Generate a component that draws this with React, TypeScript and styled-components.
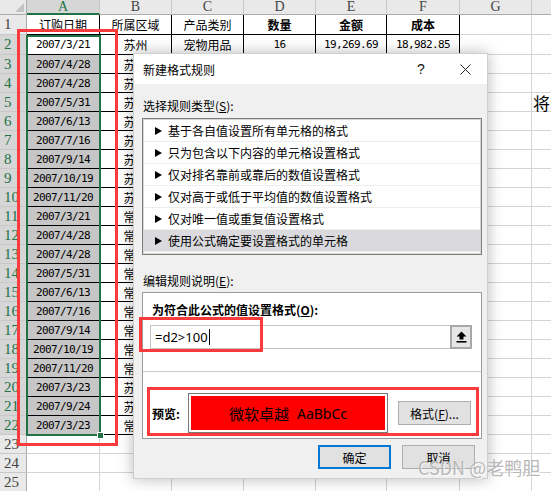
import styled, { createGlobalStyle } from 'styled-components';

const GlobalStyle = createGlobalStyle`
  html, body {
    margin: 0;
    padding: 0;
    overflow: hidden;
    background: #fff;
  }
  body {
    font-family: "Noto Sans CJK SC", "Noto Sans", sans-serif;
    color: #000;
  }
`;

// row-header column, then A..I
const COLS = [27, 73, 72, 72, 72, 71, 73, 72, 72, 72];
const LETTERS = ['A', 'B', 'C', 'D', 'E', 'F', 'G', 'H', 'I'];

const HEAD = ['订购日期', '所属区域', '产品类别', '数量', '金额', '成本'];
const FIRST = ['2007/3/21', '苏州', '宠物用品', '16', '19,269.69', '18,982.85'];
const DATES = [
  '2007/4/28', '2007/4/28', '2007/5/31', '2007/6/13', '2007/7/16', '2007/9/14', '2007/10/19',
  '2007/11/20', '2007/3/21', '2007/4/28', '2007/4/28', '2007/5/31', '2007/6/13', '2007/7/16',
  '2007/9/14', '2007/10/19', '2007/11/20', '2007/3/23', '2007/9/24', '2007/3/23',
];
const CITIES = [
  '苏州', '苏州', '苏州', '苏州', '苏州', '苏州', '苏州', '苏州',
  '常州', '常州', '常州', '常州', '常州', '常州', '常州', '常州', '常州',
  '苏州', '苏州', '常州',
];

const RULES = [
  '基于各自值设置所有单元格的格式',
  '只为包含以下内容的单元格设置格式',
  '仅对排名靠前或靠后的数值设置格式',
  '仅对高于或低于平均值的数值设置格式',
  '仅对唯一值或重复值设置格式',
  '使用公式确定要设置格式的单元格',
];

const Screen = styled.div`
  position: relative;
  width: 551px;
  height: 491px;
  overflow: hidden;
`;

const Sheet = styled.div`
  display: grid;
  grid-template-columns: ${COLS.map((c) => `${c}px`).join(' ')};
  grid-template-rows: 15px 20px 20px repeat(23, 19px);
`;

const Corner = styled.div`
  position: relative;
  background: #e9e9e9;
  border-right: 1px solid #ababab;
  border-bottom: 1px solid #ababab;
  &::after {
    content: '';
    position: absolute;
    right: 2px;
    bottom: 2px;
    border-left: 9px solid transparent;
    border-bottom: 9px solid #c4c4c4;
  }
`;

const ColHead = styled.div<{ $active?: boolean }>`
  display: flex;
  align-items: center;
  justify-content: center;
  font: 14px "Liberation Serif", serif;
  color: ${(p) => (p.$active ? '#217346' : '#444')};
  background: ${(p) => (p.$active ? '#d6d6d6' : '#e9e9e9')};
  border-right: 1px solid #c8c8c8;
  border-bottom: ${(p) => (p.$active ? '2px solid #217346' : '1px solid #ababab')};
  box-sizing: border-box;
`;

const RowHead = styled.div<{ $active?: boolean }>`
  display: flex;
  align-items: center;
  padding-left: 4px;
  font: 15px "Liberation Serif", serif;
  color: ${(p) => (p.$active ? '#217346' : '#444')};
  background: ${(p) => (p.$active ? '#d6d6d6' : '#e9e9e9')};
  border-right: 1px solid #ababab;
  border-bottom: 1px solid #c8c8c8;
  box-sizing: border-box;
  overflow: hidden;
`;

const Cell = styled.div<{ $edge?: boolean; $sel?: boolean; $bold?: boolean; $mono?: boolean; $left?: boolean }>`
  display: flex;
  align-items: center;
  justify-content: ${(p) => (p.$left ? 'flex-start' : 'center')};
  white-space: nowrap;
  box-sizing: border-box;
  font-family: ${(p) => (p.$mono ? '"DejaVu Sans Mono", monospace' : '"Noto Sans CJK SC", sans-serif')};
  font-size: ${(p) => (p.$mono ? '11px' : '12px')};
  letter-spacing: ${(p) => (p.$mono ? '-0.6px' : '0')};
  font-weight: ${(p) => (p.$bold ? 700 : 400)};
  background: ${(p) => (p.$sel ? '#c6c6c6' : '#fff')};
  border-right: 1px solid ${(p) => (p.$edge ? '#000' : '#d4d4d4')};
  border-bottom: 1px solid ${(p) => (p.$edge ? '#000' : '#d4d4d4')};
`;

const Spill = styled.span`
  font-size: 17px;
  padding-left: 1px;
`;

const Selection = styled.div`
  position: absolute;
  left: 26px;
  top: 35px;
  width: 75px;
  height: 401px;
  border: 2px solid #217346;
  box-sizing: border-box;
  &::after {
    content: '';
    position: absolute;
    right: -5px;
    bottom: -5px;
    width: 5px;
    height: 5px;
    background: #217346;
    border: 1px solid #fff;
  }
`;

const Mark = styled.div<{ $x: number; $y: number; $w: number; $h: number }>`
  position: absolute;
  left: ${(p) => p.$x}px;
  top: ${(p) => p.$y}px;
  width: ${(p) => p.$w}px;
  height: ${(p) => p.$h}px;
  border: 3px solid #fb3b3b;
  box-sizing: border-box;
  pointer-events: none;
`;

const Dialog = styled.div`
  position: absolute;
  left: 133px;
  top: 53px;
  width: 355px;
  height: 426px;
  display: flex;
  flex-direction: column;
  background: #f0f0f0;
  border: 1px solid #cfcfcf;
  box-sizing: border-box;
  box-shadow: 0 0 14px rgba(0, 0, 0, 0.28);
  font-size: 12px;
`;

const TitleBar = styled.div`
  height: 30px;
  display: flex;
  align-items: center;
  padding: 0 7px 0 9px;
  background: #fff;
`;

const Title = styled.div`
  flex: 1;
  font-size: 12px;
`;

const TitleButton = styled.div`
  width: 30px;
  height: 30px;
  display: flex;
  align-items: center;
  justify-content: center;
  font: 14px "Liberation Sans", sans-serif;
  color: #111;
  & + & {
    margin-left: 14px;
  }
`;

const Body = styled.div`
  flex: 1;
  display: flex;
  flex-direction: column;
  padding: 14px 5px 0 8px;
`;

const Label = styled.div<{ $gap?: number }>`
  line-height: 16px;
  padding-left: 1px;
  margin-top: ${(p) => p.$gap ?? 0}px;
`;

const ListBox = styled.div`
  margin-top: 4px;
  width: 340px;
  height: 137px;
  padding: 1px;
  box-sizing: border-box;
  background: #fff;
  border: 1px solid #7f7f7f;
  box-shadow: inset 0 0 0 1px #d6d6d6;
`;

const RuleItem = styled.div<{ $selected?: boolean }>`
  height: 22px;
  display: flex;
  align-items: center;
  gap: 6px;
  padding-left: 11px;
  box-sizing: border-box;
  border-bottom: 1px solid #ececec;
  background: ${(p) => (p.$selected ? '#dadade' : '#fff')};
  &::before {
    content: '';
    border-left: 7px solid #000;
    border-top: 4px solid transparent;
    border-bottom: 4px solid transparent;
  }
`;

const Panel = styled.div`
  position: relative;
  margin-top: 3px;
  width: 340px;
  height: 147px;
  box-sizing: border-box;
  background: #fff;
  border: 1px solid #9a9a9a;
  padding-top: 9px;
  display: flex;
  flex-direction: column;
`;

const FormulaLabel = styled.div`
  padding-left: 9px;
  line-height: 16px;
  font-weight: 700;
`;

const InputRow = styled.div`
  display: flex;
  margin: 7px 0 0 7px;
`;

const FormulaInput = styled.div`
  width: 300px;
  height: 24px;
  box-sizing: border-box;
  border: 1px solid #c4c4c4;
  border-right: none;
  display: flex;
  align-items: center;
  padding-left: 4px;
  font: 13px "Noto Sans", sans-serif;
  &::after {
    content: '';
    width: 1px;
    height: 16px;
    margin-left: 1px;
    background: #000;
  }
`;

const RefButton = styled.div`
  width: 22px;
  height: 24px;
  box-sizing: border-box;
  border: 2px solid #a8a8a8;
  background: #e6e6e6;
  display: flex;
  align-items: center;
  justify-content: center;
`;

const Divider = styled.div`
  margin-top: 22px;
  height: 1px;
  background: #cdcdcd;
`;

const PreviewRow = styled.div`
  display: flex;
  align-items: center;
  margin-top: 21px;
  padding-left: 9px;
`;

const PreviewLabel = styled.div`
  width: 36px;
  font-weight: 700;
`;

const Swatch = styled.div`
  width: 200px;
  height: 40px;
  padding: 2px;
  box-sizing: border-box;
  border: 1px solid #7a7a7a;
  background: #fff;
`;

const SwatchFill = styled.div`
  height: 100%;
  background: #ff0000;
  display: flex;
  align-items: center;
  justify-content: center;
  gap: 8px;
  font-size: 15px;
  span {
    font: 14px "Noto Sans", sans-serif;
  }
`;

const Button = styled.div<{ $primary?: boolean }>`
  width: 73px;
  height: 24px;
  box-sizing: border-box;
  display: flex;
  align-items: center;
  justify-content: center;
  background: #e1e1e1;
  border: ${(p) => (p.$primary ? '2px solid #0078d7' : '1px solid #adadad')};
  font-size: 12px;
`;

const FormatButton = styled(Button)`
  margin-left: 10px;
`;

const Footer = styled.div`
  display: flex;
  justify-content: flex-end;
  gap: 11px;
  margin-top: 6px;
  padding-right: 7px;
`;

const Watermark = styled.div`
  position: absolute;
  left: 418px;
  top: 454px;
  font: 18px "Noto Sans CJK SC", "Noto Sans", sans-serif;
  color: #b8b8b8;
  text-shadow: 1px 1px 0 rgba(255, 255, 255, 0.7);
  white-space: nowrap;
`;

const CloseIcon = () => (
  <svg width="11" height="11" viewBox="0 0 11 11">
    <path d="M0.5 0.5 L10.5 10.5 M10.5 0.5 L0.5 10.5" stroke="#222" strokeWidth="1" />
  </svg>
);

const UpIcon = () => (
  <svg width="11" height="12" viewBox="0 0 11 12">
    <path d="M5.5 0.5 L10.5 5.5 L7.5 5.5 L7.5 8.5 L3.5 8.5 L3.5 5.5 L0.5 5.5 Z" fill="#000" />
    <rect x="0.5" y="10" width="10" height="1.6" fill="#000" />
  </svg>
);

const renderRow = (r: number) => {
  const active = r >= 2 && r <= 22;
  const cells = LETTERS.map((_, c) => {
    const key = `${r}-${c}`;
    if (r === 1 && c < 6) {
      return (
        <Cell key={key} $edge $bold={c >= 3}>
          {HEAD[c]}
        </Cell>
      );
    }
    if (r === 2 && c < 6) {
      return (
        <Cell key={key} $edge $mono={c === 0 || c >= 3}>
          {FIRST[c]}
        </Cell>
      );
    }
    if (r >= 3 && r <= 22 && c < 6) {
      if (c === 0) {
        return (
          <Cell key={key} $edge $sel $mono>
            {DATES[r - 3]}
          </Cell>
        );
      }
      return (
        <Cell key={key} $edge>
          {c === 1 ? CITIES[r - 3] : ''}
        </Cell>
      );
    }
    if (r === 5 && c === 7) {
      return (
        <Cell key={key} $left>
          <Spill>将满足条件的</Spill>
        </Cell>
      );
    }
    return <Cell key={key} />;
  });
  return [
    <RowHead key={`h${r}`} $active={active}>
      {r}
    </RowHead>,
    ...cells,
  ];
};

export default function App() {
  return (
    <>
      <GlobalStyle />
      <Screen>
        <Sheet>
          <Corner />
          {LETTERS.map((l, i) => (
            <ColHead key={l} $active={i === 0}>
              {l}
            </ColHead>
          ))}
          {Array.from({ length: 25 }, (_, i) => renderRow(i + 1))}
        </Sheet>

        <Selection />
        <Mark $x={17} $y={29} $w={101} $h={417} />

        <Dialog>
          <TitleBar>
            <Title>新建格式规则</Title>
            <TitleButton>?</TitleButton>
            <TitleButton>
              <CloseIcon />
            </TitleButton>
          </TitleBar>
          <Body>
            <Label>
              选择规则类型(<u>S</u>):
            </Label>
            <ListBox>
              {RULES.map((rule, i) => (
                <RuleItem key={rule} $selected={i === RULES.length - 1}>
                  {rule}
                </RuleItem>
              ))}
            </ListBox>

            <Label $gap={18}>
              编辑规则说明(<u>E</u>):
            </Label>
            <Panel>
              <FormulaLabel>
                为符合此公式的值设置格式(<u>O</u>):
              </FormulaLabel>
              <InputRow>
                <FormulaInput>=d2&gt;100</FormulaInput>
                <RefButton>
                  <UpIcon />
                </RefButton>
              </InputRow>
              <Divider />
              <PreviewRow>
                <PreviewLabel>预览:</PreviewLabel>
                <Swatch>
                  <SwatchFill>
                    微软卓越<span>AaBbCc</span>
                  </SwatchFill>
                </Swatch>
                <FormatButton>
                  格式(<u>F</u>)...
                </FormatButton>
              </PreviewRow>
            </Panel>

            <Footer>
              <Button $primary>确定</Button>
              <Button>取消</Button>
            </Footer>
          </Body>

          <Mark $x={5} $y={263} $w={124} $h={35} />
          <Mark $x={13} $y={333} $w={332} $h={49} />
        </Dialog>

        <Watermark>CSDN @老鸭胆</Watermark>
      </Screen>
    </>
  );
}
